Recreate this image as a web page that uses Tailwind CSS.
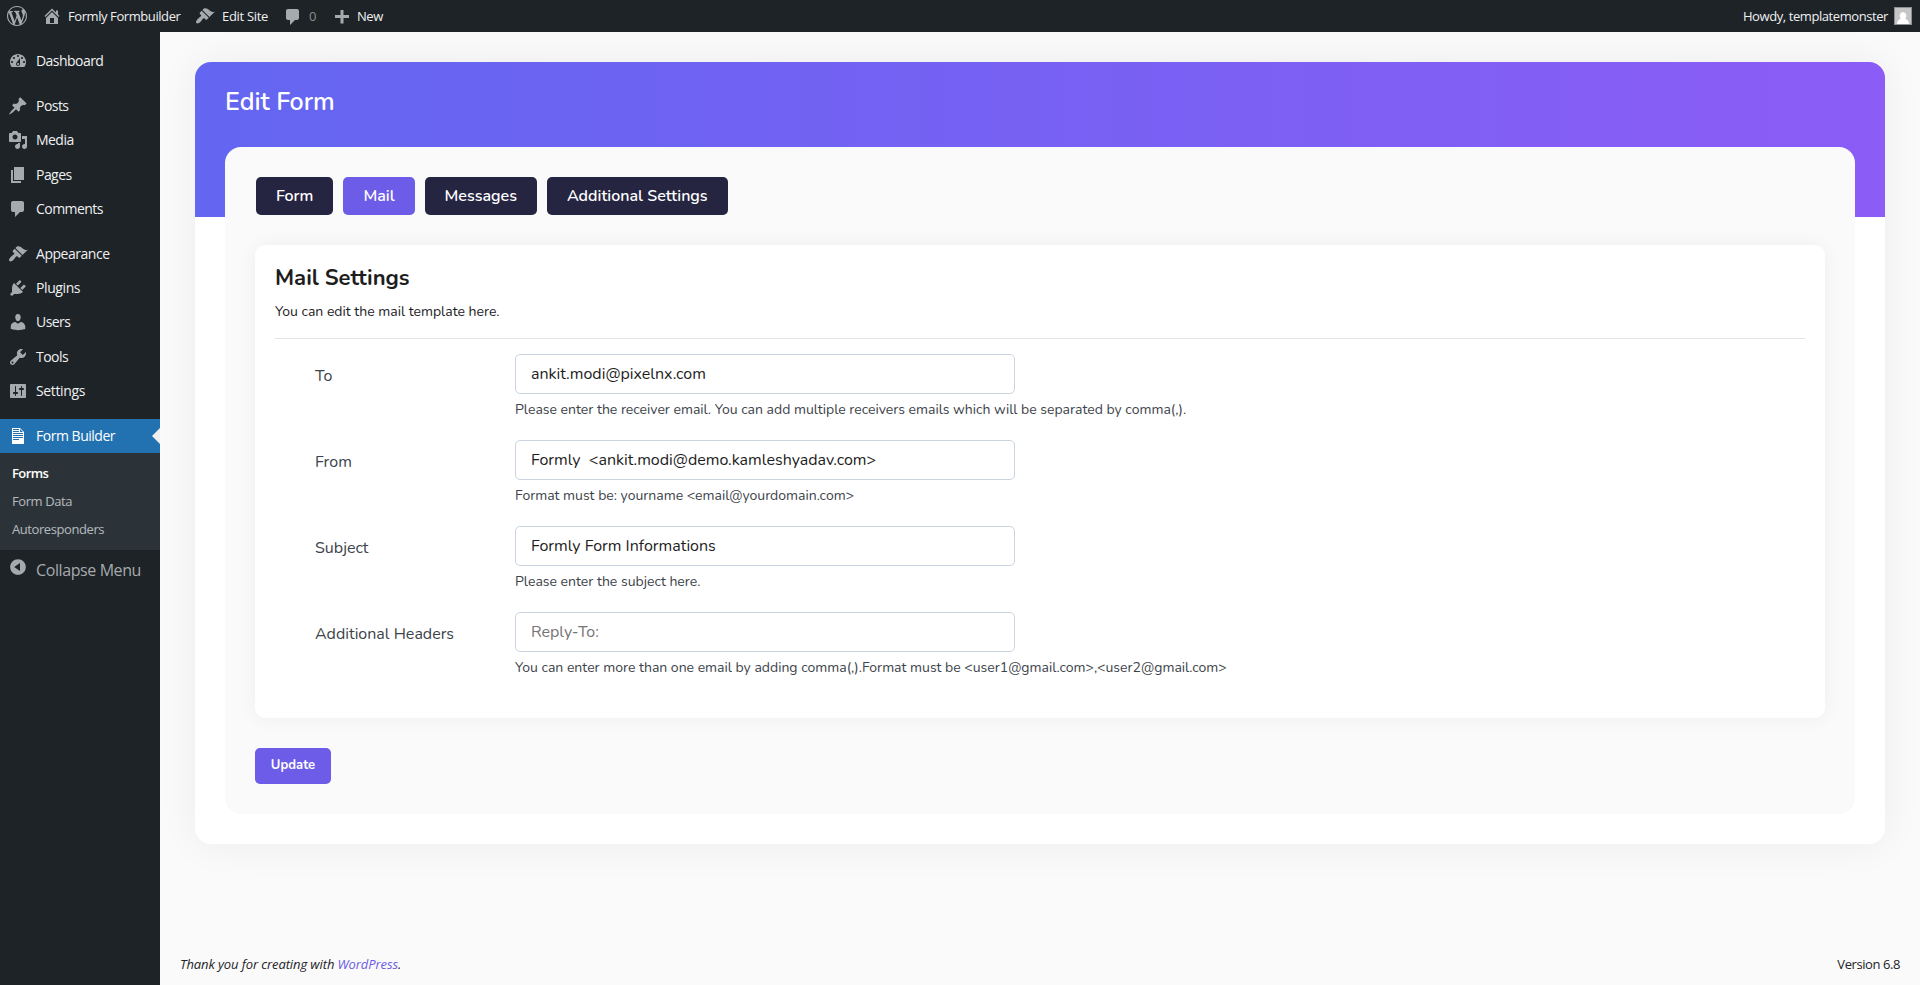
<!DOCTYPE html>
<html lang="en-US">
<head>
    <meta charset="UTF-8">
    <meta name="viewport" content="width=device-width, initial-scale=1.0">
    <title>Edit Form</title>
    <script src="https://cdn.jsdelivr.net/npm/@tailwindcss/browser@4"></script>
</head>
<body class="bg-[#fafafa] h-screen overflow-hidden flex flex-col text-[13px] font-['Open_Sans','Noto_Sans',sans-serif]">

    <!-- Admin bar -->
    <header class="h-8 shrink-0 bg-[#1d2327] text-[#f0f0f1] flex items-center justify-between pl-[7px] pr-2 tracking-[-0.42px] whitespace-nowrap">
        <div class="flex items-center">
            <svg class="w-5 h-5 fill-[#a7aaad]" viewBox="0 0 20 20"><path d="M20 10c0-5.51-4.49-10-10-10C4.48 0 0 4.49 0 10c0 5.52 4.48 10 10 10 5.51 0 10-4.48 10-10zM7.78 15.37L4.37 6.22c.55-.02 1.17-.08 1.17-.08.5-.06.44-1.13-.06-1.11 0 0-1.45.11-2.37.11-.18 0-.37 0-.58-.01C4.12 2.69 6.87 1.11 10 1.11c2.33 0 4.45.87 6.05 2.34-.68-.11-1.65.39-1.65 1.58 0 .74.45 1.36.9 2.1.35.61.55 1.36.55 2.46 0 1.49-1.4 5-1.4 5l-3.03-8.37c.54-.02.82-.17.82-.17.5-.05.44-1.25-.06-1.22 0 0-1.44.12-2.38.12-.87 0-2.33-.12-2.33-.12-.5-.03-.56 1.2-.06 1.22l.92.08 1.26 3.41zM17.41 10c.24-.64.74-1.87.43-4.25.7 1.29 1.05 2.71 1.05 4.25 0 3.29-1.73 6.24-4.4 7.78.97-2.59 1.94-5.2 2.92-7.78zM6.1 18.09C3.12 16.65 1.11 13.53 1.11 10c0-1.3.23-2.48.72-3.59C3.25 10.3 4.67 14.2 6.1 18.09zm4.03-6.63l2.58 6.98c-.86.29-1.76.45-2.71.45-.79 0-1.57-.11-2.29-.33.81-2.38 1.62-4.74 2.42-7.1z"/></svg>
            <svg class="w-5 h-5 ml-[15px] fill-[#a7aaad]" viewBox="0 0 20 20"><path d="M16 8.5l1.53 1.53-1.06 1.06L10 4.6l-6.47 6.49-1.06-1.06L10 2.5l4 4v-2h2v4zm-6-2.46l6 5.99V18H4v-5.97zM12 17v-5H8v5h4z"/></svg>
            <span class="ml-1.5 pt-px w-[114px]">Formly Formbuilder</span>
            <svg class="w-5 h-5 ml-[13px] fill-[#a7aaad]" viewBox="0 0 20 20"><path d="M14.48 11.06L7.41 3.99l1.5-1.5c.5-.56 2.3-.47 3.51.32 1.21.8 1.43 1.28 2.91 2.1 1.18.64 2.45 1.26 4.45.85zm-.71.71L6.7 4.7 4.93 6.47c-.39.39-.39 1.02 0 1.41l1.06 1.06c.39.39.39 1.03 0 1.42-.6.6-1.43 1.11-2.21 1.69-.35.26-.7.53-1.01.84C1.43 14.23.4 16.08 1.4 17.07c.99 1 2.84-.03 4.18-1.36.31-.31.58-.66.85-1.02.57-.78 1.08-1.61 1.69-2.21.39-.39 1.02-.39 1.41 0l1.06 1.06c.39.39 1.02.39 1.41 0z"/></svg>
            <span class="ml-[7px] pt-px w-[47px] tracking-[-0.31px]">Edit Site</span>
            <svg class="w-5 h-5 ml-[14px] mt-0.5 fill-[#a7aaad]" viewBox="0 0 20 20"><path d="M5 2h9c1.1 0 2 .9 2 2v7c0 1.1-.9 2-2 2h-2l-5 5v-5H5c-1.1 0-2-.9-2-2V4c0-1.1.9-2 2-2z"/></svg>
            <span class="ml-1.5 pt-px w-2 text-[#8c8f94]">0</span>
            <svg class="w-5 h-5 ml-[15px] mt-0.5 fill-[#a7aaad]" viewBox="0 0 20 20"><path d="M17 8v3h-5.5v5.5h-3V11H3V8h5.5V3h3v5z"/></svg>
            <span class="ml-[5px] pt-px">New</span>
        </div>
        <div class="flex items-center">
            <span class="pt-px">Howdy, templatemonster</span>
            <svg class="w-[18px] h-[18px] ml-1.5" viewBox="0 0 18 18"><path fill="#8c8f94" d="M0 0h18v18H0z"/><path fill="#c6c6c6" d="M1 1h16v16H1z"/><path fill="#fff" d="M9 5a3.5 3.8 0 0 1 2 6.8c2.2.5 3.6 2 4 5.200H3c.4-3.200 1.800-4.700 4-5.200A3.5 3.8 0 0 1 9 5z"/></svg>
        </div>
    </header>

    <div class="flex flex-1 min-h-0">

        <!-- Admin menu -->
        <aside class="w-40 shrink-0 bg-[#1d2327] pt-3 text-sm text-[#f0f0f1] tracking-[-0.54px]">
            <ul>
                <li class="flex items-center h-[34.3px] pl-2 gap-2">
                    <svg class="w-5 h-5 fill-[#a7aaad]" viewBox="0 0 20 20"><path d="M3.76 16h12.48c1.1-1.37 1.76-3.11 1.76-5 0-4.42-3.58-8-8-8s-8 3.58-8 8c0 1.89.66 3.63 1.76 5zM10 4c.55 0 1 .45 1 1s-.45 1-1 1-1-.45-1-1 .45-1 1-1zM6 6c.55 0 1 .45 1 1s-.45 1-1 1-1-.45-1-1 .45-1 1-1zm8 0c.55 0 1 .45 1 1s-.45 1-1 1-1-.45-1-1 .45-1 1-1zm-5.37 5.55L12 7v6c0 1.1-.9 2-2 2s-2-.9-2-2c0-.57.24-1.08.63-1.45zM4 10c.55 0 1 .45 1 1s-.45 1-1 1-1-.45-1-1 .45-1 1-1zm12 0c.55 0 1 .45 1 1s-.45 1-1 1-1-.45-1-1 .45-1 1-1zm-5 3c0-.55-.45-1-1-1s-1 .45-1 1 .45 1 1 1 1-.45 1-1z"/></svg>
                    <span>Dashboard</span>
                </li>
            </ul>
            <ul class="mt-[10.7px]">
                <li class="flex items-center h-[34.3px] pl-2 gap-2">
                    <svg class="w-5 h-5 fill-[#a7aaad]" viewBox="0 0 20 20"><path d="M10.44 3.02l1.82-1.82 6.36 6.35-1.83 1.82c-1.05-.68-2.48-.57-3.41.36l-.75.75c-.92.93-1.04 2.35-.35 3.41l-1.83 1.82-2.41-2.41-2.8 2.79c-.42.42-3.38 2.71-3.8 2.29s1.86-3.39 2.28-3.81l2.79-2.79L4.1 9.36l1.83-1.82c1.05.69 2.48.57 3.4-.36l.75-.75c.93-.92 1.05-2.35.36-3.41z"/></svg>
                    <span>Posts</span>
                </li>
                <li class="flex items-center h-[34.3px] pl-2 gap-2">
                    <svg class="w-5 h-5 fill-[#a7aaad]" viewBox="0 0 20 20"><path d="M13 11V4c0-.55-.45-1-1-1h-1.67L9 1H5L3.67 3H2c-.55 0-1 .45-1 1v7c0 .55.45 1 1 1h10c.55 0 1-.45 1-1zM7 4.5c1.38 0 2.5 1.12 2.5 2.5S8.38 9.5 7 9.5 4.5 8.38 4.5 7 5.62 4.5 7 4.5zM14 6h5v10.5c0 1.38-1.12 2.5-2.5 2.5S14 17.88 14 16.5s1.12-2.5 2.5-2.5c.17 0 .34.02.5.05V9h-3V6zm-4 8.05V13h2v3.5c0 1.38-1.12 2.5-2.5 2.5S7 17.88 7 16.5 8.12 14 9.5 14c.17 0 .34.02.5.05z"/></svg>
                    <span>Media</span>
                </li>
                <li class="flex items-center h-[34.3px] pl-2 gap-2">
                    <svg class="w-5 h-5 fill-[#a7aaad]" viewBox="0 0 20 20"><path d="M6 15V2h10v13H6zm-1 1h8v2H3V5h2v11z"/></svg>
                    <span>Pages</span>
                </li>
                <li class="flex items-center h-[34.3px] pl-2 gap-2">
                    <svg class="w-5 h-5 fill-[#a7aaad]" viewBox="0 0 20 20"><path d="M5 2h9c1.1 0 2 .9 2 2v7c0 1.1-.9 2-2 2h-2l-5 5v-5H5c-1.1 0-2-.9-2-2V4c0-1.1.9-2 2-2z"/></svg>
                    <span>Comments</span>
                </li>
            </ul>
            <ul class="mt-[10.7px]">
                <li class="flex items-center h-[34.3px] pl-2 gap-2">
                    <svg class="w-5 h-5 fill-[#a7aaad]" viewBox="0 0 20 20"><path d="M14.48 11.06L7.41 3.99l1.5-1.5c.5-.56 2.3-.47 3.51.32 1.21.8 1.43 1.28 2.91 2.1 1.18.64 2.45 1.26 4.45.85zm-.71.71L6.7 4.7 4.93 6.47c-.39.39-.39 1.02 0 1.41l1.06 1.06c.39.39.39 1.03 0 1.42-.6.6-1.43 1.11-2.21 1.69-.35.26-.7.53-1.01.84C1.43 14.23.4 16.08 1.4 17.07c.99 1 2.84-.03 4.18-1.36.31-.31.58-.66.85-1.02.57-.78 1.08-1.61 1.69-2.21.39-.39 1.02-.39 1.41 0l1.06 1.06c.39.39 1.02.39 1.41 0z"/></svg>
                    <span class="tracking-[-0.47px]">Appearance</span>
                </li>
                <li class="flex items-center h-[34.3px] pl-2 gap-2">
                    <svg class="w-5 h-5 fill-[#a7aaad]" viewBox="0 0 20 20"><path d="M13.11 4.36L9.87 7.6 8 5.73l3.24-3.24c.35-.34 1.05-.2 1.56.32.52.51.66 1.21.31 1.55zm-8 1.77l.91-1.12 9.01 9.01-1.19.84c-.71.71-2.63 1.16-3.82 1.16H6.14L4.9 17.26c-.59.59-1.54.59-2.12 0-.59-.58-.59-1.53 0-2.12l1.24-1.24v-3.88c0-1.13.4-3.19 1.09-3.89zm7.26 3.97l3.24-3.24c.34-.35 1.04-.21 1.55.31.52.51.66 1.21.31 1.55l-3.24 3.25z"/></svg>
                    <span class="tracking-[-0.4px]">Plugins</span>
                </li>
                <li class="flex items-center h-[34.3px] pl-2 gap-2 pb-px">
                    <svg class="w-5 h-5 fill-[#a7aaad]" viewBox="0 0 20 20"><path d="M10 9.25c-2.27 0-2.73-3.44-2.73-3.44C7 4.02 7.82 2 9.97 2c2.16 0 2.98 2.02 2.71 3.81 0 0-.41 3.44-2.68 3.44zm0 2.57L12.72 10c2.39 0 4.52 2.33 4.52 4.53v2.49s-3.65 1.13-7.24 1.13c-3.65 0-7.24-1.13-7.24-1.13v-2.49c0-2.25 1.94-4.48 4.47-4.48z"/></svg>
                    <span>Users</span>
                </li>
                <li class="flex items-center h-[34.3px] pl-2 gap-2">
                    <svg class="w-5 h-5 fill-[#a7aaad]" viewBox="0 0 20 20"><path d="M16.68 9.77c-1.34 1.34-3.3 1.67-4.95.99l-5.41 6.52c-.99.99-2.59.99-3.58 0s-.99-2.59 0-3.57l6.52-5.42c-.68-1.65-.35-3.61.99-4.95 1.28-1.28 3.12-1.62 4.72-1.06l-2.89 2.89 2.82 2.82 2.86-2.87c.53 1.58.18 3.39-1.08 4.65zM3.81 16.21c.4.39 1.04.39 1.43 0 .4-.4.4-1.04 0-1.43-.39-.4-1.03-.4-1.43 0-.39.39-.39 1.03 0 1.43z"/></svg>
                    <span>Tools</span>
                </li>
                <li class="flex items-center h-[34.3px] pl-2 gap-2">
                    <svg class="w-5 h-5 fill-[#a7aaad]" viewBox="0 0 20 20"><path d="M18 16V4c0-.55-.45-1-1-1H3c-.55 0-1 .45-1 1v12c0 .55.45 1 1 1h14c.55 0 1-.45 1-1zM8 11h1c.55 0 1 .45 1 1s-.45 1-1 1H8v1.5c0 .28-.22.5-.5.5s-.5-.22-.5-.5V13H6c-.55 0-1-.45-1-1s.45-1 1-1h1V5.5c0-.28.22-.5.5-.5s.5.22.5.5V11zm5-2h-1c-.55 0-1-.45-1-1s.45-1 1-1h1V5.5c0-.28.22-.5.5-.5s.5.22.5.5V7h1c.55 0 1 .45 1 1s-.45 1-1 1h-1v5.5c0 .28-.22.5-.5.5s-.5-.22-.5-.5V9z"/></svg>
                    <span class="tracking-[-0.35px]">Settings</span>
                </li>
            </ul>
            <!-- Current item with its submenu -->
            <div class="mt-[10.5px] relative flex items-center h-[34px] pl-2 gap-2 bg-[#2271b1] text-white">
                <svg class="w-5 h-5 fill-white" viewBox="0 0 20 20"><path d="M12 2l4 4v12H4V2h8zM5 3v1h6V3H5zm7 3h3l-3-3v3zM5 5v1h6V5H5zm10 3V7H5v1h10zm0 2V9H5v1h10zm0 2v-1H5v1h10zm-4 2v-1H5v1h6z"/></svg>
                <span class="tracking-[-0.48px]">Form Builder</span>
                <span class="absolute right-0 top-[9px] border-y-8 border-y-transparent border-r-8 border-r-[#f0f0f1]"></span>
            </div>
            <ul class="h-[97px] bg-[#2c3338] pt-1.5 pl-3 text-[13px] leading-7 tracking-[-0.42px] text-[#f0f6fc]/70">
                <li class="font-semibold text-white tracking-[-0.6px]">Forms</li>
                <li>Form Data</li>
                <li>Autoresponders</li>
            </ul>
            <div class="flex pl-2 gap-2 pt-[7px] text-base text-[#a7aaad] tracking-[-0.4px]">
                <svg class="w-5 h-5 fill-[#a7aaad]" viewBox="0 0 20 20"><path d="M10 2.16c4.33 0 7.84 3.51 7.84 7.84s-3.51 7.84-7.84 7.84S2.16 14.33 2.16 10 5.71 2.16 10 2.16zm2 11.72V6.12L6.18 9.97z"/></svg>
                <span class="mt-px">Collapse Menu</span>
            </div>
        </aside>

        <!-- Page -->
        <main class="flex-1 flex flex-col justify-between">
            <div class="mt-[30px] mx-[35px] h-[782px] rounded-2xl bg-white bg-[linear-gradient(90deg,#6366f1,#8b5cf6)] bg-[length:100%_155px] bg-no-repeat shadow-[0_0_40px_rgba(0,0,0,0.06)] px-[30px] font-['Nunito','Lato',sans-serif]">
                <h1 class="h-[85px] pt-[21px] text-[25px] leading-[39px] font-semibold text-white">Edit Form</h1>

                <div class="h-[667px] rounded-2xl bg-[#fafafa] p-[30px]">
                    <nav class="flex gap-2.5 pl-px text-base font-semibold text-white">
                        <a class="h-[38px] leading-[38px] px-5 rounded-[5px] bg-[#252441]">Form</a>
                        <a class="h-[38px] leading-[38px] px-5 rounded-[5px] bg-[#6c5ce7]">Mail</a>
                        <a class="h-[38px] leading-[38px] px-5 rounded-[5px] bg-[#252441]">Messages</a>
                        <a class="h-[38px] leading-[38px] px-5 rounded-[5px] bg-[#252441]">Additional Settings</a>
                    </nav>

                    <section class="mt-[30px] h-[473px] rounded-[10px] bg-white shadow-[0_0_20px_rgba(0,0,0,0.05)] px-5 pt-[19px]">
                        <h2 class="text-[22px] leading-7 font-bold text-[#1d1d1d]">Mail Settings</h2>
                        <p class="mt-[9px] pb-4 border-b border-[#e2e4e7] text-sm leading-[21px] text-[#1d2327]">You can edit the mail template here.</p>

                        <form class="mt-[15px] ml-10 flex flex-col gap-[18px] text-[#3c434a]">
                            <div class="flex h-[68px]">
                                <label class="w-[200px] mt-2.5 text-base leading-6">To</label>
                                <div>
                                    <input class="block w-[500px] h-10 px-[15px] border border-[#cbd5e1] rounded-[5px] text-base text-[#1d1d1d]" value="ankit.modi@pixelnx.com">
                                    <p class="mt-[5px] text-sm leading-[21px]">Please enter the receiver email. You can add multiple receivers emails which will be separated by comma(,).</p>
                                </div>
                            </div>
                            <div class="flex h-[68px]">
                                <label class="w-[200px] mt-2.5 text-base leading-6">From</label>
                                <div>
                                    <input class="block w-[500px] h-10 px-[15px] border border-[#cbd5e1] rounded-[5px] text-base text-[#1d1d1d]" value="Formly  &lt;ankit.modi@demo.kamleshyadav.com&gt;">
                                    <p class="mt-[5px] text-sm leading-[21px]">Format must be: yourname &lt;email@yourdomain.com&gt;</p>
                                </div>
                            </div>
                            <div class="flex h-[68px]">
                                <label class="w-[200px] mt-2.5 text-base leading-6">Subject</label>
                                <div>
                                    <input class="block w-[500px] h-10 px-[15px] border border-[#cbd5e1] rounded-[5px] text-base text-[#1d1d1d]" value="Formly Form Informations">
                                    <p class="mt-[5px] text-sm leading-[21px]">Please enter the subject here.</p>
                                </div>
                            </div>
                            <div class="flex h-[68px]">
                                <label class="w-[200px] mt-2.5 text-base leading-6">Additional Headers</label>
                                <div>
                                    <input class="block w-[500px] h-10 px-[15px] border border-[#cbd5e1] rounded-[5px] text-base placeholder:text-[#757575]" placeholder="Reply-To:">
                                    <p class="mt-[5px] text-sm leading-[21px]">You can enter more than one email by adding comma(,).Format must be &lt;user1@gmail.com&gt;,&lt;user2@gmail.com&gt;</p>
                                </div>
                            </div>
                        </form>
                    </section>

                    <button class="mt-[30px] block w-[76px] h-9 pb-px rounded-[5px] bg-[#6c5ce7] text-white text-[13px] font-bold">Update</button>
                </div>
            </div>

            <footer class="flex justify-between items-center h-10 px-5 text-[#1d2327]">
                <p class="italic tracking-[-0.1px]">Thank you for creating with <a class="text-[#6c5ce7]">WordPress</a>.</p>
                <p class="tracking-[-0.42px]">Version 6.8</p>
            </footer>
        </main>
    </div>
</body>
</html>
